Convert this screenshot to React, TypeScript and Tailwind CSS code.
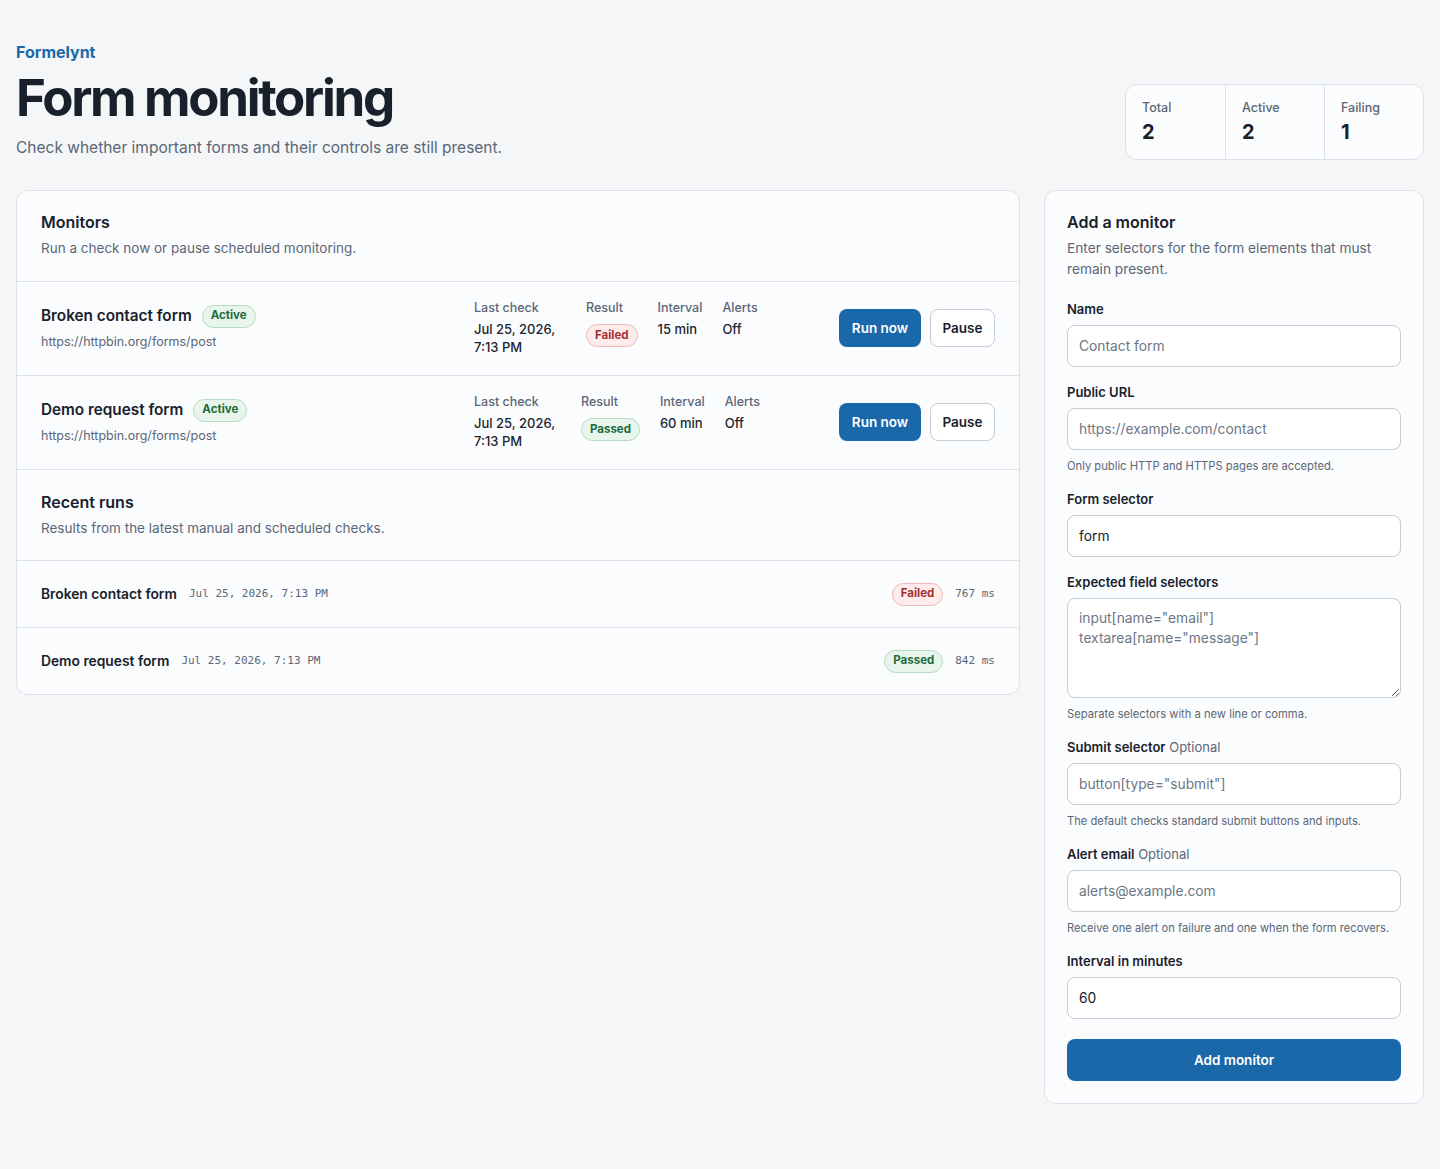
import React from "react";

type Monitor = {
  name: string;
  url: string;
  lastCheck: string;
  result: "Failed" | "Passed";
  interval: string;
  alerts: string;
};

const monitors: Monitor[] = [
  {
    name: "Broken contact form",
    url: "https://httpbin.org/forms/post",
    lastCheck: "Jul 25, 2026, 7:13 PM",
    result: "Failed",
    interval: "15 min",
    alerts: "Off",
  },
  {
    name: "Demo request form",
    url: "https://httpbin.org/forms/post",
    lastCheck: "Jul 25, 2026, 7:13 PM",
    result: "Passed",
    interval: "60 min",
    alerts: "Off",
  },
];

const runs = [
  { name: "Broken contact form", at: "Jul 25, 2026, 7:13 PM", result: "Failed" as const, ms: "767 ms" },
  { name: "Demo request form", at: "Jul 25, 2026, 7:13 PM", result: "Passed" as const, ms: "842 ms" },
];

function Badge({ tone, children }: { tone: "green" | "red"; children: React.ReactNode }) {
  const cls =
    tone === "green"
      ? "bg-[#e7f5ec] border-[#b5dcc3] text-[#1d6b3c]"
      : "bg-[#fdeceb] border-[#efb9b7] text-[#a5302d]";
  return (
    <span className={`inline-flex items-center h-[23px] px-2 rounded-full border text-[11.5px] font-bold ${cls}`}>
      {children}
    </span>
  );
}

function Meta({ label, children, className = "" }: { label: string; children: React.ReactNode; className?: string }) {
  return (
    <div className={className}>
      <div className="text-[12.5px] leading-4 font-medium text-[#5b6676]">{label}</div>
      <div className="mt-[5px] text-[13px] leading-[17.5px] font-medium text-[#1b2430]">{children}</div>
    </div>
  );
}

function Field({
  label,
  optional,
  help,
  children,
}: {
  label: string;
  optional?: boolean;
  help?: string;
  children: React.ReactNode;
}) {
  return (
    <div>
      <label className="block mb-1.5 text-[13px] leading-5 font-semibold text-[#18212c]">
        {label}
        {optional && <span className="font-normal text-[#5b6676]"> Optional</span>}
      </label>
      {children}
      {help && <p className="mt-2 text-[11.2px] leading-4 text-[#5b6676]">{help}</p>}
    </div>
  );
}

const inputCls =
  "w-full h-[42px] px-[11px] rounded-lg border border-[#c5cdd7] bg-white text-[13.8px] text-[#18212c] placeholder:text-[#6b7686] outline-none";

const mono = "font-['DejaVu_Sans_Mono',_'Liberation_Mono',_monospace] text-[11px] text-[#5b6676]";

export default function App() {
  return (
    <div className="min-h-screen bg-[#f4f6f8] text-[#18212c] font-['Inter',_'Liberation_Sans',_sans-serif]">
      <div className="px-4 pt-10 pb-16">
        <header className="flex items-end justify-between">
          <div>
            <div className="text-[16px] leading-6 font-bold text-[#1a68a9]">Formelynt</div>
            <h1 className="mt-[5px] text-[51px] leading-[58px] font-bold tracking-[-0.045em] text-[#17202b]">
              Form monitoring
            </h1>
            <p className="mt-[9px] text-[15.5px] leading-6 text-[#5b6676]">
              Check whether important forms and their controls are still present.
            </p>
          </div>
          <div className="flex rounded-xl border border-[#dde2e8] bg-[#fbfcfd]">
            {[
              ["Total", "2"],
              ["Active", "2"],
              ["Failing", "1"],
            ].map(([label, value], i) => (
              <div key={label} className={`w-[99px] px-4 pt-[15px] pb-[15px] ${i > 0 ? "border-l border-[#dde2e8]" : ""}`}>
                <div className="text-[12.5px] leading-4 font-medium text-[#5b6676]">{label}</div>
                <div className="mt-1 text-[20px] leading-6 font-bold text-[#17202b]">{value}</div>
              </div>
            ))}
          </div>
        </header>

        <div className="mt-[30px] flex items-start gap-6">
          <section className="flex-1 rounded-xl border border-[#dde2e8] bg-[#fbfcfd]">
            <div className="px-6 pt-[19px] pb-[23px] border-b border-[#dde2e8]">
              <h2 className="text-[16px] leading-6 font-semibold text-[#18212c]">Monitors</h2>
              <p className="mt-1 text-[13.5px] leading-5 text-[#5b6676]">Run a check now or pause scheduled monitoring.</p>
            </div>
            {monitors.map((m) => (
              <div key={m.name} className="flex items-center px-6 pt-[18px] pb-[19px] border-b border-[#dde2e8]">
                <div className="flex-1">
                  <div className="flex items-center gap-[10px]">
                    <span className="text-[15.3px] leading-6 font-semibold text-[#18212c]">{m.name}</span>
                    <Badge tone="green">Active</Badge>
                  </div>
                  <div className="mt-1 text-[12.5px] leading-5 text-[#5b6676]">{m.url}</div>
                </div>
                <div className="flex w-[286px] gap-5">
                  <Meta label="Last check" className="w-[92px]">
                    {m.lastCheck}
                  </Meta>
                  <div>
                    <div className="text-[12.5px] leading-4 font-medium text-[#5b6676]">Result</div>
                    <div className="mt-[5px]">
                      <Badge tone={m.result === "Failed" ? "red" : "green"}>{m.result}</Badge>
                    </div>
                  </div>
                  <Meta label="Interval">{m.interval}</Meta>
                  <Meta label="Alerts">{m.alerts}</Meta>
                </div>
                <div className="ml-[79px] flex gap-[9px]">
                  <button className="h-[38px] w-[82px] rounded-lg bg-[#1a68a9] text-white text-[13.5px] font-semibold">
                    Run now
                  </button>
                  <button className="h-[38px] w-[65px] rounded-lg border border-[#c5cdd7] bg-white text-[#18212c] text-[13.5px] font-semibold">
                    Pause
                  </button>
                </div>
              </div>
            ))}
            <div className="px-6 pt-5 pb-[22px] border-b border-[#dde2e8]">
              <h2 className="text-[16px] leading-6 font-semibold text-[#18212c]">Recent runs</h2>
              <p className="mt-1 text-[13.5px] leading-5 text-[#5b6676]">Results from the latest manual and scheduled checks.</p>
            </div>
            {runs.map((r, i) => (
              <div
                key={r.name}
                className={`flex items-center justify-between px-6 ${i < runs.length - 1 ? "h-[67px] border-b border-[#dde2e8]" : "h-[66px]"}`}
              >
                <div className="flex items-center gap-3">
                  <span className="text-[13.8px] font-semibold text-[#18212c]">{r.name}</span>
                  <span className={mono}>{r.at}</span>
                </div>
                <div className="flex items-center gap-3">
                  <Badge tone={r.result === "Failed" ? "red" : "green"}>{r.result}</Badge>
                  <span className={mono}>{r.ms}</span>
                </div>
              </div>
            ))}
          </section>

          <aside className="w-[380px] rounded-xl border border-[#dde2e8] bg-[#fbfcfd] px-[22px] pt-[19px] pb-[22px]">
            <h2 className="text-[16px] leading-6 font-semibold text-[#18212c]">Add a monitor</h2>
            <p className="mt-1 text-[13.7px] leading-[21px] text-[#5b6676]">
              Enter selectors for the form elements that must remain present.
            </p>
            <form className="mt-[19px] flex flex-col gap-[15px]" onSubmit={(e) => e.preventDefault()}>
              <Field label="Name">
                <input className={inputCls} placeholder="Contact form" />
              </Field>
              <Field label="Public URL" help="Only public HTTP and HTTPS pages are accepted.">
                <input className={inputCls} placeholder="https://example.com/contact" />
              </Field>
              <Field label="Form selector">
                <input className={inputCls} defaultValue="form" />
              </Field>
              <Field label="Expected field selectors" help="Separate selectors with a new line or comma.">
                <textarea
                  className="block w-full h-[100px] px-[11px] py-[9px] rounded-lg border border-[#c5cdd7] bg-white text-[13.8px] leading-5 text-[#18212c] placeholder:text-[#6b7686] outline-none"
                  placeholder={'input[name="email"]\ntextarea[name="message"]'}
                />
              </Field>
              <Field label="Submit selector" optional help="The default checks standard submit buttons and inputs.">
                <input className={inputCls} placeholder='button[type="submit"]' />
              </Field>
              <Field label="Alert email" optional help="Receive one alert on failure and one when the form recovers.">
                <input className={inputCls} placeholder="alerts@example.com" />
              </Field>
              <Field label="Interval in minutes">
                <input className={inputCls} defaultValue="60" />
              </Field>
              <button className="mt-[5px] h-[42px] rounded-lg bg-[#1a68a9] text-white text-[13.5px] font-semibold">
                Add monitor
              </button>
            </form>
          </aside>
        </div>
      </div>
    </div>
  );
}
